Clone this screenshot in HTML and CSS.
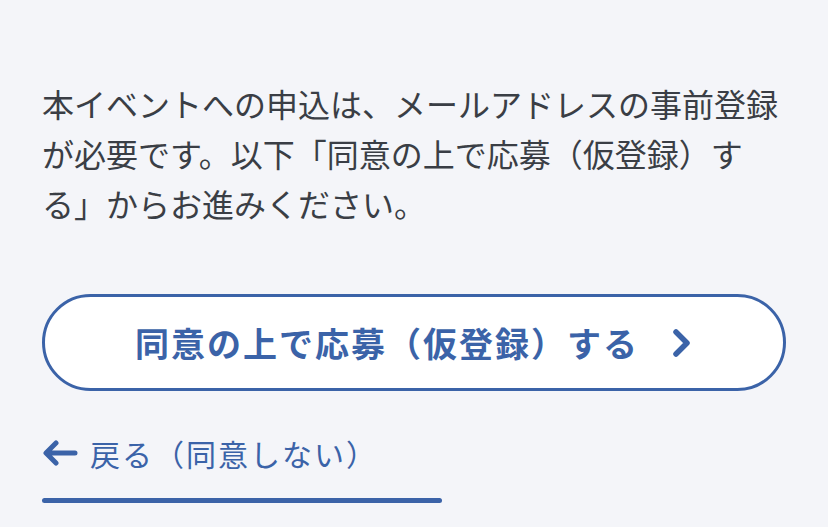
FILE: index.html
```html
<!DOCTYPE html>
<html lang="ja">
<head>
<meta charset="utf-8">
<link rel="stylesheet" href="styles.css">
</head>
<body>
<main class="page">
  <p class="lead">本イベントへの申込は、メールアドレスの事前登録が必要です。以下「同意の上で応募（仮登録）する」からお進みください。</p>
  <a class="btn" href="#">
    <span class="btn-label">同意の上で応募（仮登録）する</span>
    <svg class="chev" width="22" height="30" viewBox="0 0 22 30"><path d="M5 4 L16 15 L5 26" fill="none" stroke="#3b63a8" stroke-width="5.5" stroke-linecap="round" stroke-linejoin="round"/></svg>
  </a>
  <a class="back" href="#">
    <svg class="arrow" width="36" height="26" viewBox="0 0 36 26"><path d="M33 13 H5 M14 3 L4 13 L14 23" fill="none" stroke="#3b63a8" stroke-width="5" stroke-linecap="round" stroke-linejoin="round"/></svg>
    <span>戻る（同意しない）</span>
  </a>
  <div class="bar"></div>
</main>
</body>
</html>
```

FILE: styles.css
```css
html, body {
  margin: 0;
  padding: 0;
  background: #f4f5f9;
}
body {
  font-family: "Noto Sans CJK JP", "Noto Sans", sans-serif;
  color: #3a3e45;
}
.page {
  width: 744px;
  padding: 78px 0 0 42px;
}
.lead {
  margin: 0;
  font-size: 32px;
  line-height: 50px;
}
.btn {
  margin-top: 66px;
  box-sizing: border-box;
  height: 97px;
  border: 3px solid #3b63a8;
  border-radius: 50px;
  background: #fff;
  display: flex;
  align-items: center;
  justify-content: center;
  gap: 32px;
  text-decoration: none;
  color: #3b63a8;
}
.btn-label {
  font-size: 34px;
  font-weight: 700;
  letter-spacing: 2px;
}
.chev { display: block; }
.back {
  margin-top: 40px;
  display: flex;
  align-items: center;
  gap: 12px;
  color: #3b63a8;
  text-decoration: none;
  font-size: 30px;
  line-height: 44px;
  letter-spacing: 2px;
}
.arrow { display: block; }
.bar {
  margin-top: 23px;
  width: 400px;
  height: 5px;
  border-radius: 3px;
  background: #3b63a8;
}
```
